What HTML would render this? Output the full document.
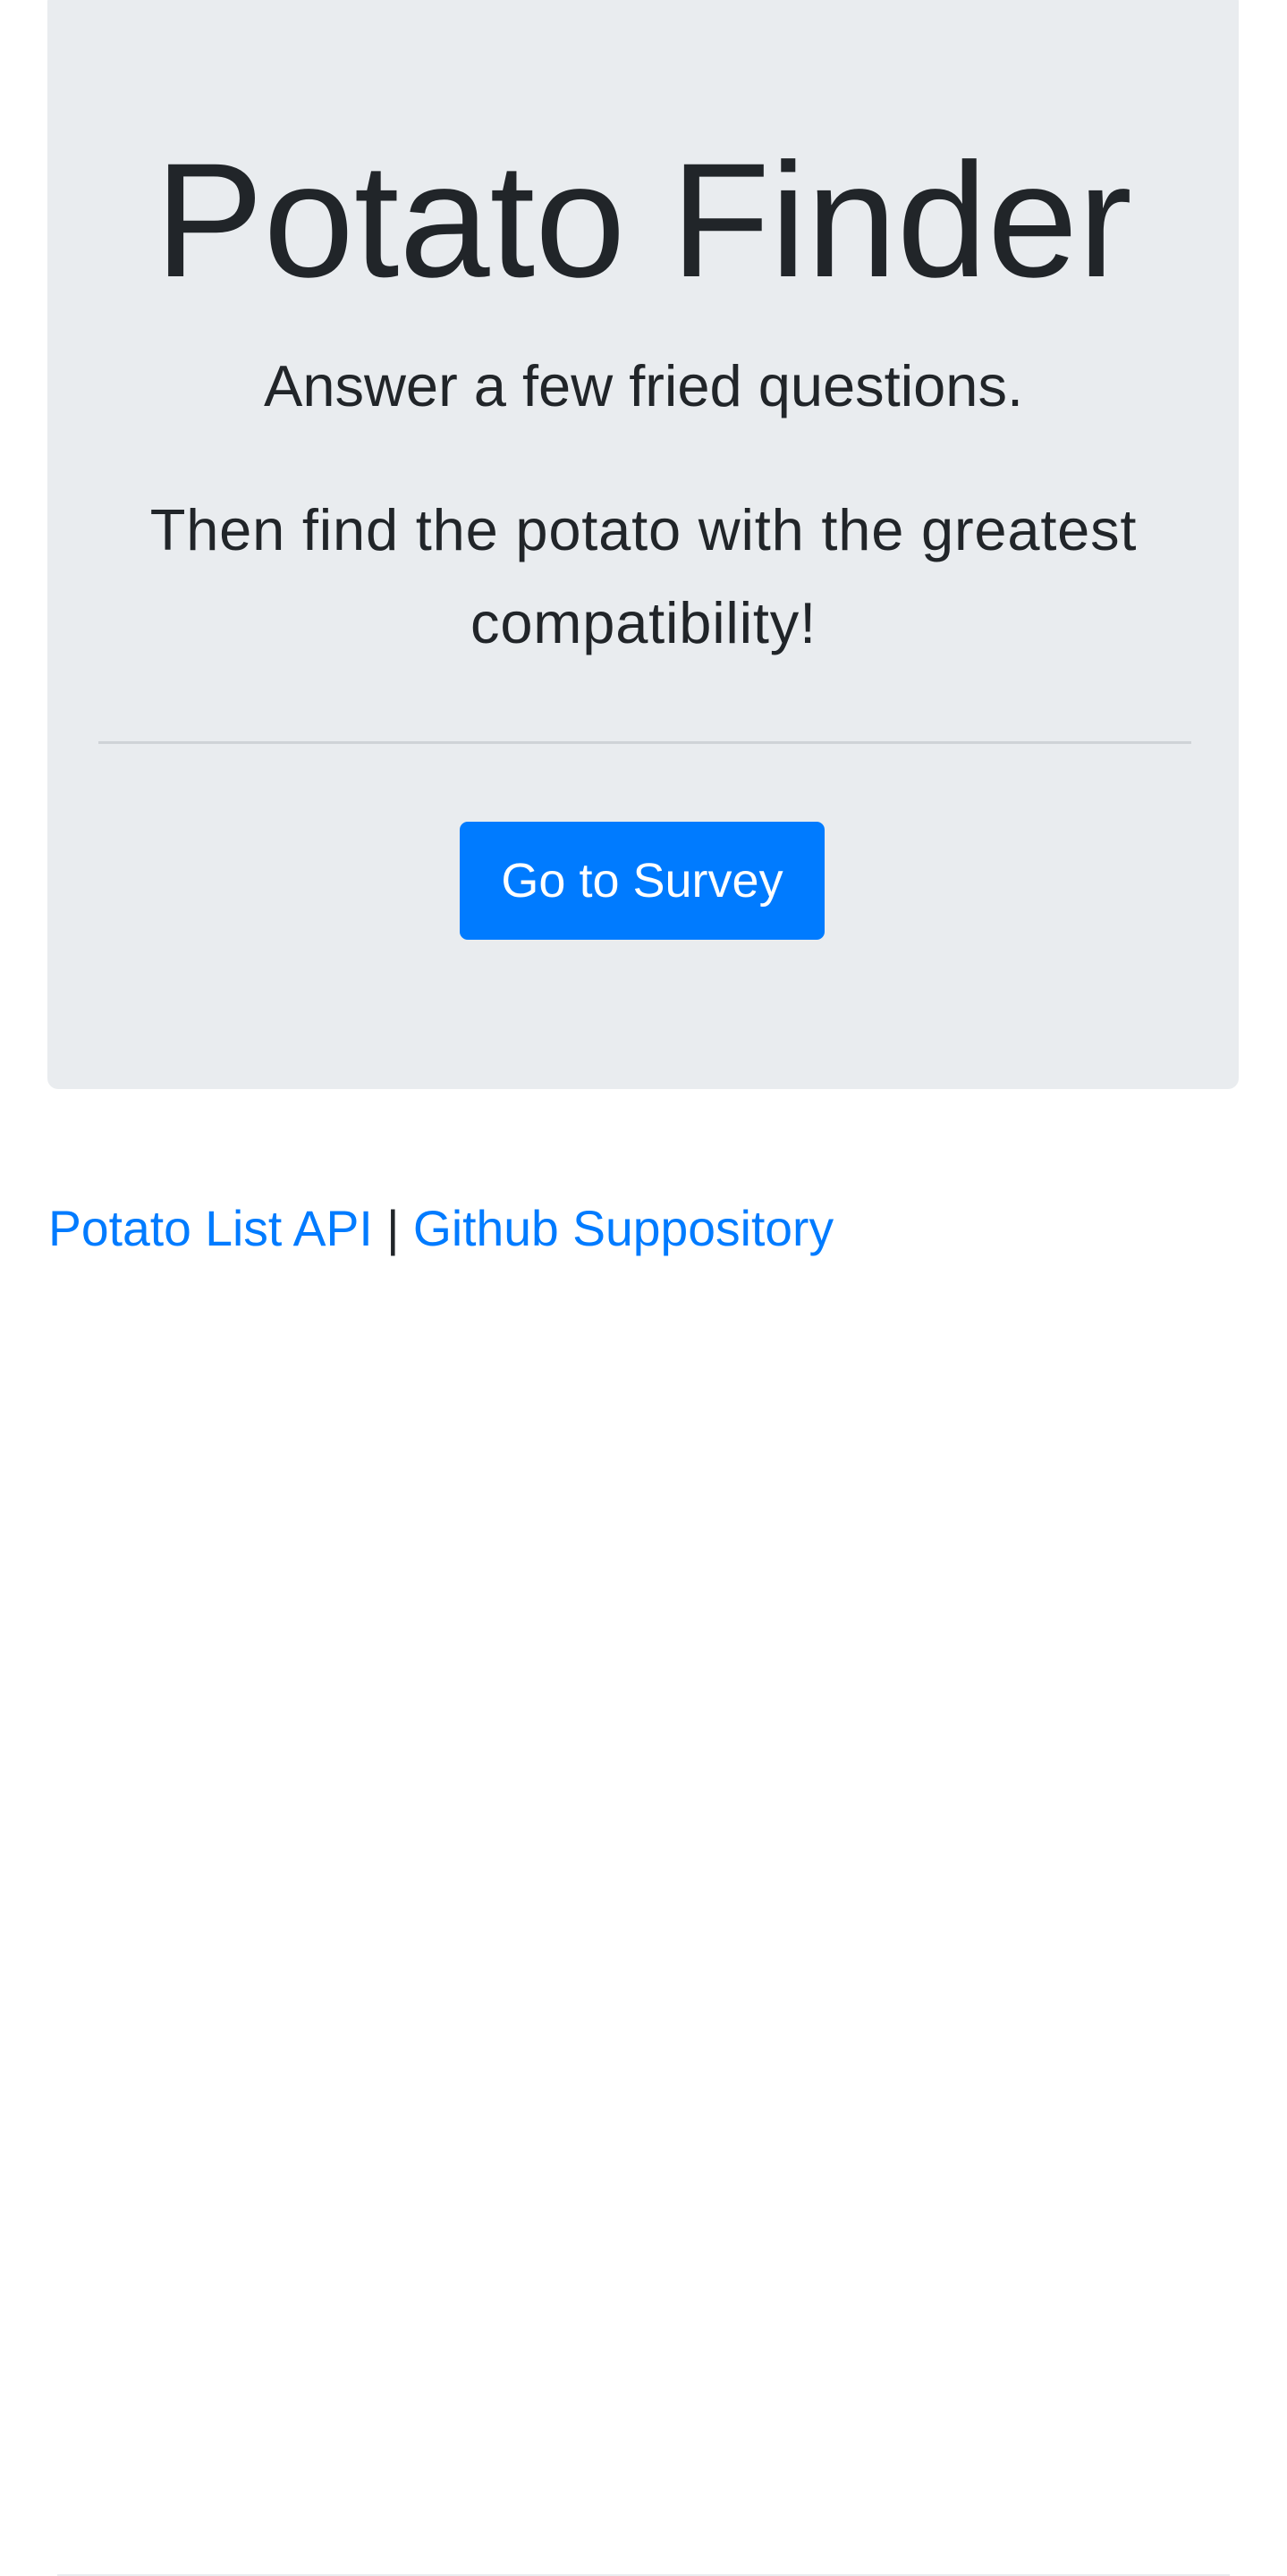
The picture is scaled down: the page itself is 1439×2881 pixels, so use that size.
<!DOCTYPE html>
<html><head><meta charset="utf-8">
<style>
html,body{margin:0;padding:0;background:#fff;}
body{width:1439px;height:2881px;position:relative;overflow:hidden;font-family:"Liberation Sans",Arial,sans-serif;color:#212529;}
.jumbo{position:absolute;left:53px;top:-10px;width:1332px;height:1228px;background:#e9ecef;border-radius:12px;}
.t{position:absolute;left:0;width:1439px;text-align:center;white-space:nowrap;}
.title{top:155px;font-size:182px;line-height:182px;}
.lead{font-size:65px;line-height:104px;}
.hr{position:absolute;left:110px;width:1222px;top:829px;height:3px;background:#cfd3d7;}
.btn{position:absolute;left:514px;top:919px;width:408px;height:132px;background:#007bff;border-radius:9px;color:#fff;font-size:54px;display:flex;align-items:center;justify-content:center;}
.links{position:absolute;left:54px;top:1345px;font-size:55.3px;line-height:58px;white-space:nowrap;}
.links a{color:#007bff;text-decoration:none;}
.bot{position:absolute;left:64px;width:1311px;top:2879px;height:2px;background:#e9ecef;}
</style></head><body>
<div class="jumbo"></div>
<div class="t title">Potato Finder</div>
<div class="t lead" style="top:380px">Answer a few fried questions.</div>
<div class="t lead" style="top:541px;letter-spacing:0.8px">Then find the potato with the greatest<br>compatibility!</div>
<div class="hr"></div>
<div class="btn">Go to Survey</div>
<div class="links"><a>Potato List API</a> | <a>Github Suppository</a></div>
<div class="bot"></div>
</body></html>
